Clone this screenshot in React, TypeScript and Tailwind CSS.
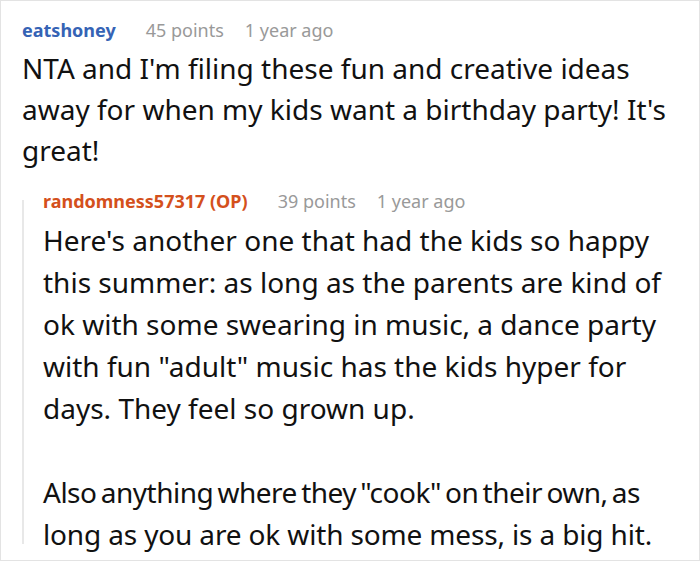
import React from "react";

export default function App() {
  return (
    <div
      className="w-[700px] h-[561px] border border-[#e3e3e3] bg-white px-[21px] pt-[17px] text-[#111]"
      style={{ fontFamily: '"Noto Sans", "Open Sans", sans-serif' }}
    >
      <div className="flex items-center h-6 text-[18px] leading-6">
        <span className="font-bold text-[#3563b5]">eatshoney</span>
        <span className="ml-[30px] text-[#999]">45 points</span>
        <span className="ml-[21px] text-[#999]">1 year ago</span>
      </div>
      <p className="mt-[6px] text-[28px] leading-[41px]">
        NTA and I'm filing these fun and creative ideas away for when my kids want a birthday party! It's great!
      </p>
      <div className="mt-[18px] flex">
        <div className="w-[2px] shrink-0 bg-[#e8e8e8] mt-[11px] mb-[11px]" />
        <div className="pl-[19px] flex-1">
          <div className="flex items-center h-6 text-[18px] leading-6">
            <span className="font-bold text-[#d4501c]">randomness57317 (OP)</span>
            <span className="ml-[30px] text-[#999]">39 points</span>
            <span className="ml-[21px] text-[#999]">1 year ago</span>
          </div>
          <div className="mt-[6px] text-[28px] leading-[42px]">
            <p>
              Here's another one that had the kids so happy this summer: as long as the parents are kind of ok with some swearing in music, a dance party with fun "adult" music has the kids hyper for days. They feel so grown up.
            </p>
            <p className="mt-[42px]">
              <span className="whitespace-nowrap tracking-[-0.5px] [word-spacing:-2.5px]">
                Also anything where they "cook" on their own, as
              </span>
              <br />
              <span className="tracking-[-0.15px]">long as you are ok with some mess, is a big hit.</span>
            </p>
          </div>
        </div>
      </div>
    </div>
  );
}
